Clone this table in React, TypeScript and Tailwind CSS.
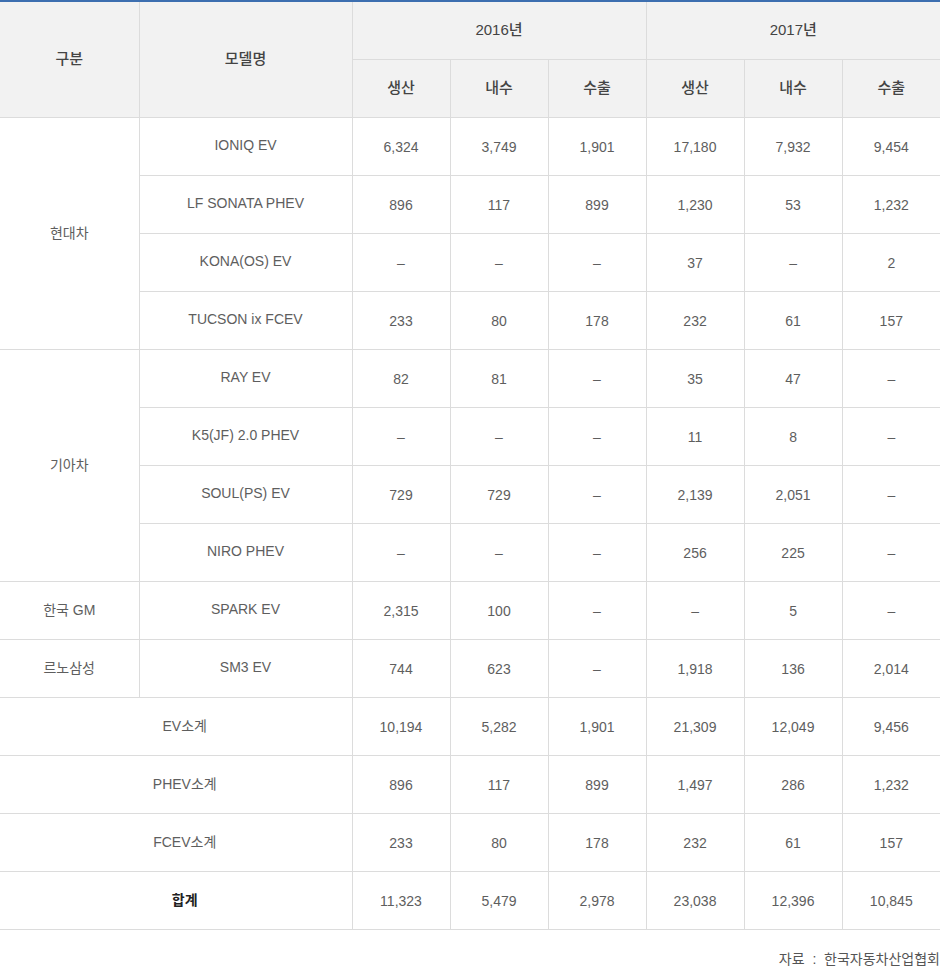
const font = { fontFamily: '"Liberation Sans", "Noto Sans CJK KR", sans-serif' };

type Row = { model: string; v: string[] };

const groups: { name: string; rows: Row[] }[] = [
  {
    name: '현대차',
    rows: [
      { model: 'IONIQ EV', v: ['6,324', '3,749', '1,901', '17,180', '7,932', '9,454'] },
      { model: 'LF SONATA PHEV', v: ['896', '117', '899', '1,230', '53', '1,232'] },
      { model: 'KONA(OS) EV', v: ['–', '–', '–', '37', '–', '2'] },
      { model: 'TUCSON ix FCEV', v: ['233', '80', '178', '232', '61', '157'] },
    ],
  },
  {
    name: '기아차',
    rows: [
      { model: 'RAY EV', v: ['82', '81', '–', '35', '47', '–'] },
      { model: 'K5(JF) 2.0 PHEV', v: ['–', '–', '–', '11', '8', '–'] },
      { model: 'SOUL(PS) EV', v: ['729', '729', '–', '2,139', '2,051', '–'] },
      { model: 'NIRO PHEV', v: ['–', '–', '–', '256', '225', '–'] },
    ],
  },
  { name: '한국 GM', rows: [{ model: 'SPARK EV', v: ['2,315', '100', '–', '–', '5', '–'] }] },
  { name: '르노삼성', rows: [{ model: 'SM3 EV', v: ['744', '623', '–', '1,918', '136', '2,014'] }] },
];

const totals = [
  { label: 'EV소계', v: ['10,194', '5,282', '1,901', '21,309', '12,049', '9,456'] },
  { label: 'PHEV소계', v: ['896', '117', '899', '1,497', '286', '1,232'] },
  { label: 'FCEV소계', v: ['233', '80', '178', '232', '61', '157'] },
];

const th = 'bg-[#f2f2f2] border border-[#dcdcdc] text-[15px] font-medium text-[#444] text-center align-middle p-0';
const td = 'border border-[#dcdcdc] text-[14px] text-[#5e5e5e] text-center align-middle p-0';

function Values({ v }: { v: string[] }) {
  return (
    <>
      {v.map((x, i) => (
        <td key={i} className={`${td} pt-[2px] ${i === 5 ? 'border-r-0' : ''}`}>
          {x}
        </td>
      ))}
    </>
  );
}

export default function App() {
  return (
    <div className="w-[940px] bg-white" style={font}>
      <table className="w-[940px] border-collapse table-fixed border-t-2 border-t-[#3d6fb0]">
        <colgroup>
          <col className="w-[139px]" />
          <col className="w-[213px]" />
          <col className="w-[98px]" />
          <col className="w-[98px]" />
          <col className="w-[98px]" />
          <col className="w-[98px]" />
          <col className="w-[98px]" />
          <col className="w-[98px]" />
        </colgroup>
        <thead>
          <tr className="h-[58px]">
            <th rowSpan={2} className={`${th} border-l-0 border-t-0`}>구분</th>
            <th rowSpan={2} className={`${th} border-t-0`}>모델명</th>
            <th colSpan={3} className={`${th} border-t-0`}>2016년</th>
            <th colSpan={3} className={`${th} border-t-0 border-r-0`}>2017년</th>
          </tr>
          <tr className="h-[58px]">
            {['생산', '내수', '수출', '생산', '내수', '수출'].map((h, i) => (
              <th key={i} className={`${th} ${i === 5 ? 'border-r-0' : ''}`}>{h}</th>
            ))}
          </tr>
        </thead>
        <tbody>
          {groups.map((g) =>
            g.rows.map((r, ri) => (
              <tr key={g.name + r.model} className="h-[58px]">
                {ri === 0 && (
                  <td rowSpan={g.rows.length} className={`${td} border-l-0`}>
                    {g.name}
                  </td>
                )}
                <td className={`${td} pb-[2px]`}>{r.model}</td>
                <Values v={r.v} />
              </tr>
            ))
          )}
          {totals.map((t) => (
            <tr key={t.label} className="h-[58px]">
              <td colSpan={2} className={`${td} border-l-0 pl-[18px]`}>{t.label}</td>
              <Values v={t.v} />
            </tr>
          ))}
          <tr className="h-[58px]">
            <td colSpan={2} className={`${td} border-l-0 pl-[18px] font-bold text-[#222]`}>합계</td>
            <Values v={['11,323', '5,479', '2,978', '23,038', '12,396', '10,845']} />
          </tr>
        </tbody>
      </table>
      <div className="flex justify-end pt-[19px] text-[14px] text-[#555]">
        <span className="whitespace-pre">자료  :  한국자동차산업협회</span>
      </div>
    </div>
  );
}
